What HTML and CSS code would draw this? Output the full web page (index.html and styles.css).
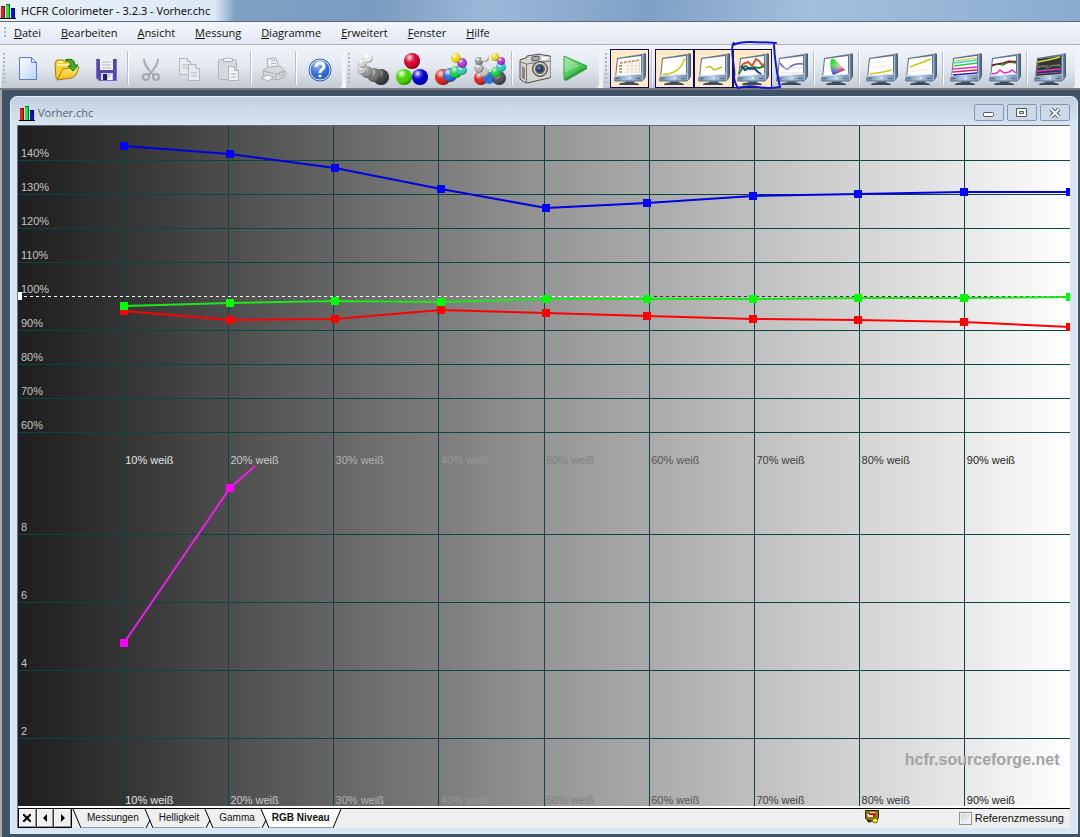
FILE: index.html
```html
<!DOCTYPE html>
<html lang="de">
<head>
<meta charset="utf-8">
<title>HCFR Colorimeter - 3.2.3 - Vorher.chc</title>
<link rel="stylesheet" href="styles.css">
</head>
<body>
<svg class="defs" aria-hidden="true">
  <defs>
    <linearGradient id="page" x1="0" y1="0" x2="1" y2="1"><stop offset="0" stop-color="#fff"/><stop offset="1" stop-color="#bcd3f8"/></linearGradient>
    <linearGradient id="gold" x1="0" y1="0" x2="0" y2="1"><stop offset="0" stop-color="#fff08a"/><stop offset="1" stop-color="#f2b90c"/></linearGradient>
    <linearGradient id="side" x1="0" y1="0" x2="1" y2="0"><stop offset="0" stop-color="#8ba3bd"/><stop offset="1" stop-color="#3c5068"/></linearGradient>
    <linearGradient id="bezel" x1="0" y1="0" x2="1" y2="0"><stop offset="0" stop-color="#6d859f"/><stop offset=".5" stop-color="#b4cce8"/><stop offset="1" stop-color="#7890ab"/></linearGradient>
    <linearGradient id="go" x1="0" y1="0" x2="1" y2="1"><stop offset="0" stop-color="#9be8a0"/><stop offset=".5" stop-color="#4cca5a"/><stop offset="1" stop-color="#1da535"/></linearGradient>
    <linearGradient id="gamutA" x1="0" y1="0" x2="1" y2="1"><stop offset="0" stop-color="#0d0"/><stop offset=".45" stop-color="#8fe08f"/><stop offset=".6" stop-color="#f8b0a0"/><stop offset=".85" stop-color="#f02020"/></linearGradient>
    <linearGradient id="gamutB" x1=".2" y1="0" x2="0" y2="1"><stop offset=".4" stop-color="#22f" stop-opacity="0"/><stop offset="1" stop-color="#22f"/></linearGradient>
    <radialGradient id="help" cx=".4" cy=".25" r=".8"><stop offset="0" stop-color="#9cc0f6"/><stop offset=".5" stop-color="#3d74dc"/><stop offset="1" stop-color="#1d4db8"/></radialGradient>
    <radialGradient id="shine" cx=".35" cy=".28" r=".75"><stop offset="0" stop-color="#fff" stop-opacity=".95"/><stop offset=".3" stop-color="#fff" stop-opacity=".25"/><stop offset=".65" stop-color="#000" stop-opacity="0"/><stop offset="1" stop-color="#000" stop-opacity=".4"/></radialGradient>
    <symbol id="logo" viewBox="0 0 16 16">
      <path d="M0 15.500h16" stroke="#000"/>
      <path d="M1 3h4v12H1z" fill="#f01818"/><path d="M6 1h4v14H6z" fill="#20e83a"/><path d="M11 5h4v10h-4z" fill="#1010e0"/>
      <path d="M4.500 3v12M1 3.500h3" stroke="#701010"/><path d="M9.500 1v14M6 1.500h3" stroke="#0c7020"/><path d="M14.500 5v10M11 5.500h3" stroke="#060660"/>
    </symbol>
    <symbol id="monitor" viewBox="0 0 32 32">
      <path d="M5 31.500q0-1.500 6-2l1-2h7l1 2q5 1 5 2 0 .500-1 .500H6q-1 0-1-.500z" fill="#3f4b57"/>
      <path d="M12 28h8l1 1H11z" fill="#76889a"/>
      <path d="M3 5 28 1v23L1 25z" fill="#60758c"/>
      <path d="M28 1q3-1.500 4 0v21q0 3-4 6z" fill="url(#side)"/>
      <path d="M4 6 27 3v20L2 25z" fill="#fff"/>
      <path d="m1 23 27-2v7H2q-2 0-2-2z" fill="url(#bezel)"/>
      <path d="M0 26.500q0 2 2 1.500h26l3-3" fill="none" stroke="#5d7690"/>
      <path d="M2 25.500h4M22 25.500h4" stroke="#536d88"/>
      <path d="m1 23 27-2" stroke="#dce8f4"/>
      <path d="m28.500 2v25" stroke="#a6bcd2"/>
      <circle cx="16" cy="25" r="1" fill="#e9f2fc"/>
    </symbol>
    <symbol id="cross" viewBox="0 0 10 19"><path class="tabfill" d="M1 0h9v19H9z"/><path d="m1 0 8 19M6 11l-4 8" fill="none" stroke="#000"/></symbol>
  </defs>
</svg>
<div class="app">
  <header class="titlebar">
    <svg class="logo"><use href="#logo"/></svg>
    <h1 class="caption">HCFR Colorimeter - 3.2.3 - Vorher.chc</h1>
  </header>
  <nav class="menubar">
    <span class="grip grip-short"></span>
    <button class="menu"><u>D</u>atei</button>
    <button class="menu"><u>B</u>earbeiten</button>
    <button class="menu"><u>A</u>nsicht</button>
    <button class="menu"><u>M</u>essung</button>
    <button class="menu"><u>D</u>iagramme</button>
    <button class="menu"><u>E</u>rweitert</button>
    <button class="menu"><u>F</u>enster</button>
    <button class="menu"><u>H</u>ilfe</button>
  </nav>
  <div class="toolbars">
    <div class="toolbar">
      <span class="grip"></span>
      <button class="tool" aria-label="Neu"><svg class="icon" viewBox="0 0 32 32"><path d="M7.500 4.500h12l5 5v17h-17z" fill="url(#page)" stroke="#5b7fc0"/><path d="M19.500 4.500v5h5z" fill="#e2ecfc" stroke="#5b7fc0"/></svg></button>
      <button class="tool" aria-label="Öffnen"><svg class="icon" viewBox="0 0 32 32"><path d="m5 25-1-15 2-3h6l2 2 9-1v6L9 27z" fill="#f6cf32" stroke="#a37a0c"/><path d="M6 12h12M7 9h5" stroke="#fff3a8" stroke-width="2"/><path d="m6 27 6-11 7-1 2-2 7 1-3 8-4 3z" fill="url(#gold)" stroke="#a37a0c"/><path d="M14 7q9-3 10 5h3l-5 6-5-5h3q0-5-6-6z" fill="#40b32a" stroke="#1b7110"/></svg></button>
      <button class="tool" aria-label="Speichern"><svg class="icon" viewBox="0 0 32 32"><path d="M6 6h21v22H9l-3-3z" fill="#5148ae"/><path d="M10 6h13v11H10z" fill="#f2f2f7"/><path d="M12 9h9M12 12h9M12 15h9" stroke="#b3b3c5"/><path d="M11 20h12v8H11z" fill="#d1d1df"/><path d="M13 21h4v6h-4z" fill="#24205e"/><path d="m18 27 4-6v6z" fill="#fff"/><path d="M6.500 6.500v18l3 3h17v-21" fill="none" stroke="#7870cb"/></svg></button>
      <span class="sep"></span>
      <button class="tool" aria-label="Ausschneiden"><svg class="icon" viewBox="0 0 32 32" fill="none" stroke="#a2a7ad"><path d="M9 6q0 6 7 13l3 4M23 6q0 6-7 13l-3 4" stroke-width="2"/><circle cx="11" cy="24" r="3" stroke-width="2"/><circle cx="21" cy="24" r="3" stroke-width="2"/><path d="m11 9 5 9 5-9" stroke="#dfe2e5"/></svg></button>
      <button class="tool" aria-label="Kopieren"><svg class="icon" viewBox="0 0 32 32" fill="#e8eaed" stroke="#b3b7bd"><path d="M5.500 5.500h8l3 3v13h-11z"/><path d="M13.500 5.500v3h3M8 12h6M8 15h6"/><path d="M14.500 11.500h7l4 4v12h-11z"/><path d="M21.500 11.500v4h4M17 20h6M17 23h6"/></svg></button>
      <button class="tool" aria-label="Einfügen"><svg class="icon" viewBox="0 0 32 32" fill="#d6d9dd" stroke="#b0b4ba"><path d="M5.500 7.500q0-1 1-1h15q2 0 2 2v16q0 2-2 2h-14q-2 0-2-2z"/><path d="M10.500 8.500v-3h3q1-3 3 0h3v3z" fill="#eceef0"/><path d="M15.500 13.500h6l4 4v10h-10z" fill="#f0f1f3"/><path d="M21.500 13.500v4h4M18 21h5M18 24h5"/></svg></button>
      <span class="sep"></span>
      <button class="tool" aria-label="Drucken"><svg class="icon" viewBox="0 0 32 32" fill="#d7d9dc" stroke="#a9adb2"><path d="m10 16-1-10 9-1 3 10z" fill="#f1f2f4"/><path d="m5 18 5-4 12-1 5 5v6l-8 3-13-3z"/><path d="m5 18 13 3 9-3M18 21v6" fill="none"/><path d="m9 22 7 2-6 4-7-3z" fill="#f4f5f6"/><circle cx="23" cy="21" r="2"/><path d="m13 8 4-1M13 11l5-1"/></svg></button>
      <span class="sep"></span>
      <button class="tool" aria-label="Hilfe"><svg class="icon" viewBox="0 0 32 32"><circle cx="17" cy="17" r="11" fill="url(#help)" stroke="#3460ab"/><circle cx="17" cy="17" r="10" fill="none" stroke="#e7effb"/><path d="M13 14q0-4 4-4t4 3.500q0 2-2.500 3.500-1.500 1-1.500 3" fill="none" stroke="#fff" stroke-width="3"/><circle cx="17" cy="23" r="1.600" fill="#fff"/></svg></button>
    </div>
    <div class="toolbar">
      <span class="grip"></span>
      <button class="tool" aria-label="Graustufen messen"><svg class="icon" viewBox="0 0 32 32"><circle cx="24" cy="24" r="8" fill="#444"/><circle cx="24" cy="24" r="8" fill="url(#shine)"/><circle cx="17" cy="22" r="7" fill="#777"/><circle cx="17" cy="22" r="7" fill="url(#shine)"/><circle cx="10" cy="19" r="6" fill="#999"/><circle cx="10" cy="19" r="6" fill="url(#shine)"/><circle cx="5" cy="17" r="5" fill="#ccc"/><circle cx="5" cy="17" r="5" fill="url(#shine)"/><circle cx="5" cy="10" r="5" fill="#ddd"/><circle cx="5" cy="10" r="5" fill="url(#shine)"/><circle cx="11" cy="5" r="5" fill="#f5f5f5"/><circle cx="11" cy="5" r="5" fill="url(#shine)"/></svg></button>
      <button class="tool" aria-label="Primärfarben messen"><svg class="icon" viewBox="0 0 32 32"><circle cx="16" cy="8" r="8" fill="#e0002d"/><circle cx="16" cy="8" r="8" fill="url(#shine)"/><circle cx="8" cy="24" r="8" fill="#4bdc00"/><circle cx="8" cy="24" r="8" fill="url(#shine)"/><circle cx="24" cy="24" r="8" fill="#0000d9"/><circle cx="24" cy="24" r="8" fill="url(#shine)"/></svg></button>
      <button class="tool" aria-label="Sekundärfarben messen"><svg class="icon" viewBox="0 0 32 32"><circle cx="8" cy="24" r="8" fill="#e32a22"/><circle cx="8" cy="24" r="8" fill="url(#shine)"/><circle cx="15" cy="22" r="7" fill="#2a72e0"/><circle cx="15" cy="22" r="7" fill="url(#shine)"/><circle cx="21" cy="19" r="6" fill="#1ddb43"/><circle cx="21" cy="19" r="6" fill="url(#shine)"/><circle cx="27" cy="17" r="5" fill="#35d2c8"/><circle cx="27" cy="17" r="5" fill="url(#shine)"/><circle cx="27" cy="10" r="5" fill="#b03ce0"/><circle cx="27" cy="10" r="5" fill="url(#shine)"/><circle cx="21" cy="5" r="5" fill="#f5de20"/><circle cx="21" cy="5" r="5" fill="url(#shine)"/></svg></button>
      <button class="tool" aria-label="Alle Farben messen"><svg class="icon" viewBox="0 0 32 32"><circle cx="7" cy="25" r="7" fill="#e32a22"/><circle cx="7" cy="25" r="7" fill="url(#shine)"/><circle cx="15" cy="25" r="6" fill="#2a72e0"/><circle cx="25" cy="25" r="7" fill="#555"/><circle cx="25" cy="25" r="7" fill="url(#shine)"/><circle cx="10" cy="19" r="5" fill="#ccc"/><circle cx="10" cy="19" r="5" fill="url(#shine)"/><circle cx="22" cy="19" r="5" fill="#1ddb43"/><circle cx="22" cy="19" r="5" fill="url(#shine)"/><circle cx="5" cy="15" r="5" fill="#bbb"/><circle cx="5" cy="15" r="5" fill="url(#shine)"/><circle cx="27" cy="14" r="5" fill="#35d2c8"/><circle cx="27" cy="14" r="5" fill="url(#shine)"/><circle cx="5" cy="8" r="4" fill="#999"/><circle cx="5" cy="8" r="4" fill="url(#shine)"/><circle cx="27" cy="8" r="4" fill="#b03ce0"/><circle cx="27" cy="8" r="4" fill="url(#shine)"/><circle cx="11" cy="5" r="4" fill="#eee"/><circle cx="11" cy="5" r="4" fill="url(#shine)"/><circle cx="21" cy="4" r="4" fill="#f5de20"/><circle cx="21" cy="4" r="4" fill="url(#shine)"/></svg></button>
      <span class="sep"></span>
      <button class="tool" aria-label="Kamera"><svg class="icon" viewBox="0 0 32 32"><path d="M1 8q0-2 2-2l4-1 1-2 13-2 3 1 7 1q1 0 1 2v18q0 2-2 2L8 30q-4-1-7-4z" fill="#d7d5d0" stroke="#4d4a46"/><path d="m1.500 9 6 2 24-3M7.500 11v19" fill="none" stroke="#77736e"/><path d="m3 13 3 2v12l-3-2z" fill="#898680"/><path d="m13 4 7-1v4l-7 1z" fill="#a6b0ba" stroke="#555"/><path d="M23 4h6v2l-6 1z" fill="#fff"/><circle cx="21" cy="16" r="7.500" fill="#aaa69f" stroke="#44413d"/><circle cx="21" cy="16" r="5.500" fill="#4d5560" stroke="#ece9e3"/><circle cx="21" cy="16" r="3" fill="#223b60"/><circle cx="20" cy="15" r="1.500" fill="#608acb"/></svg></button>
      <button class="tool" aria-label="Messung starten"><svg class="icon" viewBox="0 0 32 32"><path d="M6 3v24l2 1 21-12v-3z" fill="#2e9f3e"/><path d="M6 3v23l23-13z" fill="url(#go)" stroke="#36ad45"/><path d="m7 5 16 8-16 6z" fill="#fff" fill-opacity=".25"/></svg></button>
    </div>
    <div class="toolbar">
      <span class="grip"></span>
      <button class="tool tool-on" aria-label="Messungen"><svg class="icon" viewBox="0 0 32 32"><use href="#monitor"/><path d="m6 10 20-3M5 13h4M5 16h4M5 19h4" stroke="#c49c70" stroke-width="2" stroke-dasharray="3 1"/><path d="M10 13h16M10 16h16M10 19h16M14 10v10M18 9v11M22 8v12M25.500 8v12" stroke="#ecd6b8" fill="none"/></svg></button>
      <span class="sep"></span>
      <button class="tool tool-on" aria-label="Helligkeit"><svg class="icon" viewBox="0 0 32 32"><use href="#monitor"/><path d="M4 21.500Q21 21 26 5" fill="none" stroke="#cfca10" stroke-width="1.500"/></svg></button>
      <button class="tool tool-on" aria-label="Gamma"><svg class="icon" viewBox="0 0 32 32"><use href="#monitor"/><path d="M8 15q4-3 6 0t5 1l5-2" fill="none" stroke="#c9bd13" stroke-width="1.500"/></svg></button>
      <button class="tool tool-on" aria-label="RGB Niveau"><svg class="icon" viewBox="0 0 32 32"><use href="#monitor"/><path d="m4 15 2-4 5-2 4 4 4-7 3 2 3 4 3-1" fill="none" stroke="#d45432" stroke-width="2"/><path d="m2 21 3-6 4-2 4 3 4-2 5 1 6-2" fill="none" stroke="#27892b" stroke-width="2"/><path d="m4 13 4 4 4-2 6 1 3 3 3 2" fill="none" stroke="#173f87" stroke-width="2"/></svg>
        <svg class="scribble" viewBox="0 0 52 52"><path d="M4 5Q10 2 20 2t27 1M5 3Q2 4 4 20t1 16q0 6 4 12 9-3 20-1t22 0Q46 25 45 5" fill="none" stroke="#1616cf" stroke-width="2" stroke-linecap="round"/></svg></button>
      <button class="tool" aria-label="Farbtemperatur"><svg class="icon" viewBox="0 0 32 32"><use href="#monitor"/><path d="M4 10q4 6 8 6 5-6 15-5" fill="none" stroke="#6a62c9" stroke-width="1.500"/><path d="M5 20h21M6 15h20" stroke="#ddd"/></svg></button>
      <span class="sep"></span>
      <button class="tool" aria-label="CIE-Diagramm"><svg class="icon" viewBox="0 0 32 32"><use href="#monitor"/><path d="M10 6q3-1 5 2l9 9-12 5Q8 14 10 6z" fill="url(#gamutA)"/><path d="M10 6q3-1 5 2l9 9-12 5Q8 14 10 6z" fill="url(#gamutB)"/></svg></button>
      <span class="sep"></span>
      <button class="tool" aria-label="Schwarzbereich"><svg class="icon" viewBox="0 0 32 32"><use href="#monitor"/><path d="m5 15 21-3M5 11l20-4" stroke="#eee"/><path d="m4 21 13-2 9-2" fill="none" stroke="#cdc51a" stroke-width="1.500"/></svg></button>
      <button class="tool" aria-label="Weißbereich"><svg class="icon" viewBox="0 0 32 32"><use href="#monitor"/><path d="m5 19 21-3" stroke="#eee"/><path d="m5 14 21-8" fill="none" stroke="#cdc51a" stroke-width="1.500"/></svg></button>
      <span class="sep"></span>
      <button class="tool" aria-label="Sättigung Luminanz"><svg class="icon" viewBox="0 0 32 32" fill="none"><use href="#monitor"/><path d="m4 8 23-3" stroke="#ccc828"/><path d="m4 10 23-3" stroke="#2ad8cf" stroke-width="1.500"/><path d="m4 13 23-3" stroke="#31c83c" stroke-width="1.500"/><path d="m3 16 24-2" stroke="#e62bd9" stroke-width="1.500"/><path d="m3 19 24-2" stroke="#d92060" stroke-width="1.500"/><path d="m3 22 24-2" stroke="#2226a8" stroke-width="1.500"/></svg></button>
      <button class="tool" aria-label="Sättigung Abweichung"><svg class="icon" viewBox="0 0 32 32" fill="none"><use href="#monitor"/><path d="m3 13 5-2 6 1 6-3 7 1" stroke="#2a9432" stroke-width="1.500"/><path d="m3 12 6-1 5-1 6-2 7 1" stroke="#bc2522" stroke-width="1.500"/><path d="m4 12 10-2 13-2" stroke="#28204f" stroke-dasharray="3 2"/><path d="m3 21 5-1 3-3 4 3 5-1 3-2 4 3" stroke="#dc2bd7" stroke-width="1.500"/></svg></button>
      <span class="sep"></span>
      <button class="tool" aria-label="Kombinierte Ansicht"><svg class="icon" viewBox="0 0 32 32" fill="none"><use href="#monitor"/><path d="M4 6 27 3v18L2 23z" fill="#333536"/><path d="m4 9 10-2 12-3" stroke="#e4df34" stroke-width="1.500"/><path d="m3 15 6-2 5 2 5-3 8 1" stroke="#3aa548"/><path d="m3 13 7 0 8 0 9-2" stroke="#a67272" stroke-dasharray="3 1"/><path d="m3 18 24-2" stroke="#e038dc" stroke-width="1.500"/><path d="m3 21 24-2" stroke="#7e56c2"/></svg></button>
    </div>
  </div>
  <main class="workspace">
    <section class="document">
      <header class="doc-title">
        <svg class="logo"><use href="#logo"/></svg>
        <h2 class="doc-name">Vorher.chc</h2>
        <button class="win-btn" aria-label="Minimieren"><svg class="glyph" viewBox="0 0 14 10"><rect x="1.500" y="4.500" width="10" height="4" rx="1" fill="#fff" stroke="#4f5966"/></svg></button>
        <button class="win-btn" aria-label="Maximieren"><svg class="glyph" viewBox="0 0 14 10"><path d="M1.500.500h10v8h-10z" fill="#fff" stroke="#4f5966"/><path d="M4.500 3.500h4v2h-4z" fill="#dce5ef" stroke="#4f5966"/></svg></button>
        <button class="win-btn" aria-label="Schließen"><svg class="glyph" viewBox="0 0 14 10"><path d="m3 1 8 8M11 1 3 9" stroke="#4f5966" stroke-width="4"/><path d="m3 1 8 8M11 1 3 9" stroke="#fff" stroke-width="2"/></svg></button>
      </header>
      <div class="content">
        <svg class="chart" role="img" aria-label="RGB Niveau">
          <defs><linearGradient id="ramp"><stop offset="0" stop-color="#1e1e1e"/><stop offset=".1" stop-color="#343434"/><stop offset=".2" stop-color="#4d4d4d"/><stop offset=".3" stop-color="#656565"/><stop offset=".4" stop-color="#7c7c7c"/><stop offset=".5" stop-color="#959595"/><stop offset=".6" stop-color="#aaaaaa"/><stop offset=".7" stop-color="#bfbfbf"/><stop offset=".8" stop-color="#d4d4d4"/><stop offset=".9" stop-color="#e8e8e8"/><stop offset="1" stop-color="#fff"/></linearGradient></defs>
          <rect width="100%" height="100%" fill="url(#ramp)"/>
          <g class="grid">
            <line x1="10%" x2="10%" y2="100%"/><line x1="20%" x2="20%" y2="100%"/><line x1="30%" x2="30%" y2="100%"/><line x1="40%" x2="40%" y2="100%"/><line x1="50%" x2="50%" y2="100%"/><line x1="60%" x2="60%" y2="100%"/><line x1="70%" x2="70%" y2="100%"/><line x1="80%" x2="80%" y2="100%"/><line x1="90%" x2="90%" y2="100%"/>
            <line y1="5%" y2="5%" x2="100%"/><line y1="10%" y2="10%" x2="100%"/><line y1="15%" y2="15%" x2="100%"/><line y1="20%" y2="20%" x2="100%"/><line y1="30%" y2="30%" x2="100%"/><line y1="35%" y2="35%" x2="100%"/><line y1="40%" y2="40%" x2="100%"/><line y1="45%" y2="45%" x2="100%"/>
            <line y1="60%" y2="60%" x2="100%"/><line y1="70%" y2="70%" x2="100%"/><line y1="80%" y2="80%" x2="100%"/><line y1="90%" y2="90%" x2="100%"/>
          </g>
          <line class="ref-dark" x1="0" x2="100%" y1="25%" y2="25%"/>
          <line class="ref-light" x1="0" x2="60%" y1="25%" y2="25%"/>
          <text class="brand" x="99%" y="94%">hcfr.sourceforge.net</text>
          <g class="labels" fill="#c4c4c4">
            <text x="3" y="5%" dy="-3">140%</text><text x="3" y="10%" dy="-3">130%</text><text x="3" y="15%" dy="-3">120%</text><text x="3" y="20%" dy="-3">110%</text><text x="3" y="25%" dy="-3">100%</text><text x="3" y="30%" dy="-3">90%</text><text x="3" y="35%" dy="-3">80%</text><text x="3" y="40%" dy="-3">70%</text><text x="3" y="45%" dy="-3">60%</text>
            <text x="3" y="60%" dy="-3">8</text><text x="3" y="70%" dy="-3">6</text><text x="3" y="80%" dy="-3">4</text><text x="3" y="90%" dy="-3">2</text>
          </g>
          <g class="labels">
            <text x="10%" y="50%" dx="2" dy="-2" fill="#e6e6e6">10% weiß</text><text x="20%" y="50%" dx="2" dy="-2" fill="#cccccc">20% weiß</text><text x="30%" y="50%" dx="2" dy="-2" fill="#b3b3b3">30% weiß</text><text x="40%" y="50%" dx="2" dy="-2" fill="#999999">40% weiß</text><text x="50%" y="50%" dx="2" dy="-2" fill="#808080">50% weiß</text><text x="60%" y="50%" dx="2" dy="-2" fill="#555555">60% weiß</text><text x="70%" y="50%" dx="2" dy="-2" fill="#3d3d3d">70% weiß</text><text x="80%" y="50%" dx="2" dy="-2" fill="#333333">80% weiß</text><text x="90%" y="50%" dx="2" dy="-2" fill="#1a1a1a">90% weiß</text>
            <text x="10%" y="100%" dx="2" dy="-2" fill="#e6e6e6">10% weiß</text><text x="20%" y="100%" dx="2" dy="-2" fill="#cccccc">20% weiß</text><text x="30%" y="100%" dx="2" dy="-2" fill="#b3b3b3">30% weiß</text><text x="40%" y="100%" dx="2" dy="-2" fill="#999999">40% weiß</text><text x="50%" y="100%" dx="2" dy="-2" fill="#808080">50% weiß</text><text x="60%" y="100%" dx="2" dy="-2" fill="#555555">60% weiß</text><text x="70%" y="100%" dx="2" dy="-2" fill="#3d3d3d">70% weiß</text><text x="80%" y="100%" dx="2" dy="-2" fill="#333333">80% weiß</text><text x="90%" y="100%" dx="2" dy="-2" fill="#1a1a1a">90% weiß</text>
          </g>
          <svg viewBox="0 0 1052 680" preserveAspectRatio="none" width="100%" height="100%">
            <path d="M0 166h4v8H0z" fill="#fff"/>
            <g class="series red"><polyline points="106,185 212,194 317,193 423,184 528,187 629,190 735,193 840,194 946,196 1052,201"/><path d="M102 181h8v8h-8zM208 190h8v8h-8zM313 189h8v8h-8zM419 180h8v8h-8zM524 183h8v8h-8zM625 186h8v8h-8zM731 189h8v8h-8zM836 190h8v8h-8zM942 192h8v8h-8zM1048 197h8v8h-8z"/></g>
            <g class="series green"><polyline points="106,180 212,177 317,175 423,176 528,173 629,173 735,173 840,172 946,172 1052,171"/><path d="M102 176h8v8h-8zM208 173h8v8h-8zM313 171h8v8h-8zM419 172h8v8h-8zM524 169h8v8h-8zM625 169h8v8h-8zM731 169h8v8h-8zM836 168h8v8h-8zM942 168h8v8h-8zM1048 167h8v8h-8z"/></g>
            <g class="series blue"><polyline points="106,20 212,28 317,42 423,63 528,82 629,77 735,70 840,68 946,66 1052,66"/><path d="M102 16h8v8h-8zM208 24h8v8h-8zM313 38h8v8h-8zM419 59h8v8h-8zM524 78h8v8h-8zM625 73h8v8h-8zM731 66h8v8h-8zM836 64h8v8h-8zM942 62h8v8h-8zM1048 62h8v8h-8z"/></g>
            <g class="series delta"><polyline points="106,517 212,362 237,340"/><path d="M102 513h8v8h-8zM208 358h8v8h-8z"/></g>
          </svg>
        </svg>
        <footer class="tabbar">
          <div class="tab-nav">
            <button class="nav-btn" aria-label="Schließen"><svg viewBox="0 0 8 8"><path d="m0 0 8 8M8 0 0 8" stroke="#000" stroke-width="2"/></svg></button>
            <button class="nav-btn" aria-label="Zurück"><svg viewBox="0 0 8 8"><path d="m6 0-4 4 4 4z"/></svg></button>
            <button class="nav-btn" aria-label="Vor"><svg viewBox="0 0 8 8"><path d="m2 0 4 4-4 4z"/></svg></button>
          </div>
          <svg class="slash" viewBox="0 0 10 19"><path d="m1 0 8 19" stroke="#000"/></svg>
          <button class="tab">Messungen</button>
          <svg class="slash"><use href="#cross"/></svg>
          <button class="tab">Helligkeit</button>
          <svg class="slash"><use href="#cross"/></svg>
          <button class="tab">Gamma</button>
          <svg class="slash slash-on"><use href="#cross"/></svg>
          <button class="tab tab-on">RGB Niveau</button>
          <svg class="slash" viewBox="0 0 10 19"><path d="M0 0h9L1 19H0z" fill="#fff"/><path d="M9 0 1 19" stroke="#000"/></svg>
          <svg class="status" viewBox="0 0 14 14"><path d="M.500.500h13v7l-2 4h-8l-3-3z" fill="#8a7a12" stroke="#2d2a08"/><path d="M2 4h3V2h5v5H3z" fill="#f7e9d0"/><path d="M4 3h6v4H8V5H4z" fill="#d81818"/><circle cx="10" cy="10.500" r="2.500" fill="#ffef20" stroke="#665c00"/><circle cx="4" cy="11" r="1.500" fill="#222"/></svg>
          <label class="reference"><input class="check" type="checkbox">Referenzmessung</label>
        </footer>
      </div>
    </section>
  </main>
</div>
</body>
</html>
```
FILE: styles.css
```css
* { box-sizing: border-box; }
body { margin: 0; font-family: "Open Sans", "Noto Sans", sans-serif; font-size: 11px; color: #111; }
button { margin: 0; padding: 0; border: 0; background: none; font: inherit; color: inherit; }
h1, h2 { margin: 0; font-size: 11px; font-weight: 400; line-height: 16px; }
svg { display: block; }
.defs { position: absolute; width: 0; height: 0; }
.app { display: flex; flex-direction: column; min-height: 100vh; background: #3f5369; }
.logo { width: 16px; height: 16px; flex: none; }

.titlebar { display: flex; align-items: center; gap: 5px; height: 22px; border-bottom: 1px solid #59697c; background: linear-gradient(90deg, rgba(238, 245, 252, .95) 0, rgba(230, 240, 250, .9) 215px, rgba(230, 240, 250, 0) 235px), linear-gradient(100deg, #86a6c9 0, #7b9bc0 35%, #9bb9d9 45%, #7f9fc5 60%, #a3c0de 75%, #8baccf 100%); }
.caption { font-family: "Noto Sans", "Open Sans", sans-serif; }

.menubar { display: flex; align-items: center; height: 23px; padding-left: 4px; gap: 20px; background: linear-gradient(#f2f5fb, #e3e9f4); border-bottom: 1px solid #a9adb4; }
.menu { line-height: 20px; }
.menubar .grip { margin: 0 -12px 0 0; }
.grip { width: 2px; height: 32px; margin: 4px 3px 0 2px; flex: none; background: repeating-linear-gradient(#a9b7cb 0 2px, transparent 2px 4px); }
.grip-short { height: 12px; }

.toolbars { display: flex; gap: 4px; height: 45px; padding-left: 1px; background: #eef2f9; border-bottom: 2px solid #77797c; }
.toolbar { display: flex; align-items: flex-start; padding: 4px 4px 0 0; border-radius: 0 0 4px 0; background: linear-gradient(#f1f4fa 0, #e3e8f0 50%, #c3cad4 100%); }
.toolbar + .toolbar { padding-right: 6px; }
.toolbar .sep { width: 2px; height: 34px; margin: 2px 2px 0; flex: none; border-left: 1px solid #b9bfc8; background: #fff; }
.tool { position: relative; display: flex; align-items: center; justify-content: center; width: 39px; height: 39px; flex: none; }
.icon { width: 32px; height: 32px; }
.tool-on { border: 1px solid #0b0b5c; background: #ffe9c6; }
.scribble { position: absolute; left: -5px; top: -10px; width: 52px; height: 52px; z-index: 1; }

.workspace { display: flex; flex: 1; padding: 6px 2px 3px 8px; border-left: 2px solid #a7a9ab; }
.document { display: flex; flex-direction: column; flex: 1; padding: 0 7px 5px 6px; border: 1px solid #e9f2fb; border-radius: 7px 7px 0 0; background: linear-gradient(#c1d0e0, #d9e5f2 30px); }
.doc-title { display: flex; align-items: center; gap: 3px; height: 28px; padding: 3px 0 0 2px; }
.doc-name { flex: 1; color: #576370; }
.win-btn { display: flex; align-items: center; justify-content: center; width: 30px; height: 17px; border: 1px solid #8797ad; border-radius: 2px; background: #cbd9e8; }
.glyph { width: 14px; height: 10px; }
.content { display: flex; flex-direction: column; flex: 1; border-top: 1px solid #5b6a6a; border-left: 1px solid #6b7b7b; background: #efefef; }

.chart { flex: 1; width: 100%; height: 0; min-height: 400px; }
.grid line { stroke: #0b4545; shape-rendering: crispEdges; }
.ref-dark, .ref-light { stroke-dasharray: 3 3; shape-rendering: crispEdges; }
.ref-dark { stroke: #333; }
.ref-light { stroke: #fff; }
.labels { font-family: "Liberation Sans", Arial, sans-serif; font-size: 11px; }
.brand { font-family: "Liberation Sans", Arial, sans-serif; font-size: 16px; font-weight: 700; text-anchor: end; fill: #a3a3a3; }
.series polyline { fill: none; stroke-width: 2; }
.red { fill: #f00; }
.red polyline { stroke: #f00; }
.green { fill: #0f0; }
.green polyline { stroke: #1ce61c; }
.blue { fill: #00f; }
.blue polyline { stroke: #0000e0; }
.delta { fill: #f0f; }
.delta polyline { stroke: #f01cf0; }

.tabbar { display: flex; align-items: stretch; height: 22px; border-top: 2px solid #fff; font-family: "Liberation Sans", Arial, sans-serif; box-shadow: inset 0 1px #000; }
.tab-nav { display: flex; width: 54px; border: 1px solid #000; background: #333; gap: 1px; }
.nav-btn { display: flex; align-items: center; justify-content: center; flex: 1; border: 1px solid; border-color: #fff #999 #999 #fff; background: #f0f0f0; }
.nav-btn svg { width: 8px; height: 8px; }
.slash { width: 10px; height: 19px; flex: none; margin-top: 1px; }
.slash-on { --tab-fill: #fff; }
.tabfill { fill: var(--tab-fill, none); }
.tab { padding: 0 5px; margin-top: 1px; font-size: 10px; line-height: 18px; border-bottom: 1px solid #999; }
.tab-on { padding: 0 2px; background: #fff; font-weight: 700; }
.status { width: 14px; height: 14px; margin: 2px 80px 0 auto; }
.reference { display: flex; align-items: center; gap: 3px; padding-right: 6px; font-size: 11px; line-height: 18px; }
.check { appearance: none; width: 13px; height: 13px; margin: 0; border: 1px solid #8e8f8f; background: linear-gradient(135deg, #d0d4d8, #f8f8f8); box-shadow: inset 0 0 0 1px #f4f4f4; }
```
